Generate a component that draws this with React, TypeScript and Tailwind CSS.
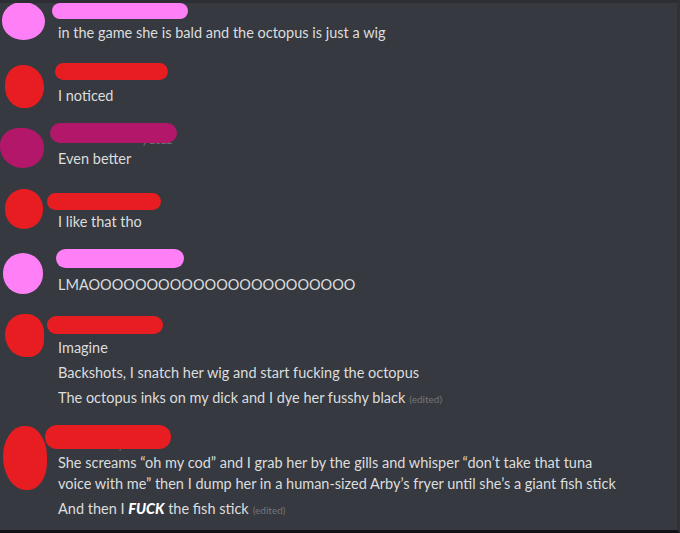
import React from "react";

type Msg = { content: React.ReactNode; edited?: boolean };

type Group = {
	avatar: string;
	avatarShape: string;
	nameBlob: string;
	messages: Msg[];
	stamp?: string;
	stampPos?: string;
};

const Edited = () => (
	<span className="ml-1 text-[10px] text-[#72767d] align-baseline">(edited)</span>
);

const groups: Group[] = [
	{
		avatar: "bg-[#ff80f6]",
		avatarShape: "ml-[2px] mt-[2px] h-[38px] w-[43px] rounded-[48%_52%_50%_50%]",
		nameBlob: "ml-[-6px] mt-[3px] h-[16px] w-[136px] bg-[#ff80f6]",
		messages: [{ content: "in the game she is bald and the octopus is just a wig" }],
	},
	{
		avatar: "bg-[#e81d21]",
		avatarShape: "ml-[5px] mt-[2px] h-[43px] w-[39px] rounded-[46%_54%_50%_50%]",
		nameBlob: "ml-[-3px] mt-0 h-[17px] w-[113px] bg-[#e81d21]",
		messages: [{ content: "I noticed" }],
	},
	{
		avatar: "bg-[#b3176a]",
		avatarShape: "ml-0 mt-[2px] h-[40px] w-[44px] rounded-[45%_50%_50%_55%]",
		nameBlob: "ml-[-8px] mt-[-3px] h-[20px] w-[127px] bg-[#b3176a]",
		messages: [{ content: "Even better" }],
		stamp: "y 2022",
		stampPos: "left-[84px] top-[9px]",
	},
	{
		avatar: "bg-[#e81d21]",
		avatarShape: "ml-[5px] mt-0 h-[40px] w-[38px] rounded-full",
		nameBlob: "ml-[-11px] mt-[4px] h-[17px] w-[114px] bg-[#e81d21]",
		messages: [{ content: "I like that tho" }],
	},
	{
		avatar: "bg-[#ff80f6]",
		avatarShape: "ml-[3px] mt-[1px] h-[41px] w-[40px] rounded-full",
		nameBlob: "ml-[-2px] mt-[-3px] h-[19px] w-[128px] bg-[#ff80f6]",
		messages: [{ content: "LMAOOOOOOOOOOOOOOOOOOOOOOO" }],
	},
	{
		avatar: "bg-[#e81d21]",
		avatarShape: "ml-[5px] mt-[-1px] h-[43px] w-[39px] rounded-[50%_45%_40%_55%]",
		nameBlob: "ml-[-11px] mt-[1px] h-[18px] w-[116px] bg-[#e81d21]",
		messages: [
			{ content: "Imagine" },
			{ content: "Backshots, I snatch her wig and start fucking the octopus" },
			{ content: "The octopus inks on my dick and I dye her fusshy black", edited: true },
		],
	},
	{
		avatar: "bg-[#e81d21]",
		avatarShape: "ml-[3px] mt-[-4px] h-[64px] w-[44px] rounded-[50%_50%_45%_55%]",
		nameBlob: "ml-[-13px] mt-[-5px] h-[24px] w-[126px] bg-[#e81d21]",
		messages: [
			{
				content:
					"She screams \u201coh my cod\u201d and I grab her by the gills and whisper \u201cdon\u2019t take that tuna voice with me\u201d then I dump her in a human-sized Arby\u2019s fryer until she\u2019s a giant fish stick",
			},
			{
				content: (
					<>
						And then I <b className="font-black italic text-white">FUCK</b> the fish stick
					</>
				),
				edited: true,
			},
		],
		stamp: "y 2022",
		stampPos: "left-[60px] top-[10px]",
	},
];

function MessageGroup({ g }: { g: Group }) {
	return (
		<div className="flex">
			<div className="w-[58px] shrink-0">
				<div className={`${g.avatar} ${g.avatarShape}`} />
			</div>
			<div className="flex flex-col w-[565px]">
				<div className="relative h-[20px]">
					{g.stamp && (
						<span
							className={`absolute ${g.stampPos} text-[10px] leading-[10px] text-[#72767d]`}
						>
							{g.stamp}
						</span>
					)}
					<div className={`relative rounded-full ${g.nameBlob}`} />
				</div>
				{g.messages.map((m, i) => (
					<p key={i} className="py-[2px] leading-[21px]">
						{m.content}
						{m.edited && <Edited />}
					</p>
				))}
			</div>
		</div>
	);
}

export default function App() {
	return (
		<div
			className="w-[680px] h-[533px] overflow-hidden bg-[#36393f] text-[#dcddde] text-[14.5px] flex flex-col border-t-[3px] border-t-[#2c2e33] border-r-[3px] border-r-[#2f3136] border-b-[3px] border-b-[#111214]"
			style={{ fontFamily: "Lato, 'Open Sans', sans-serif" }}
		>
			<div className="flex flex-col gap-[18px] mt-[-3px]">
				{groups.map((g, i) => (
					<MessageGroup key={i} g={g} />
				))}
			</div>
		</div>
	);
}
